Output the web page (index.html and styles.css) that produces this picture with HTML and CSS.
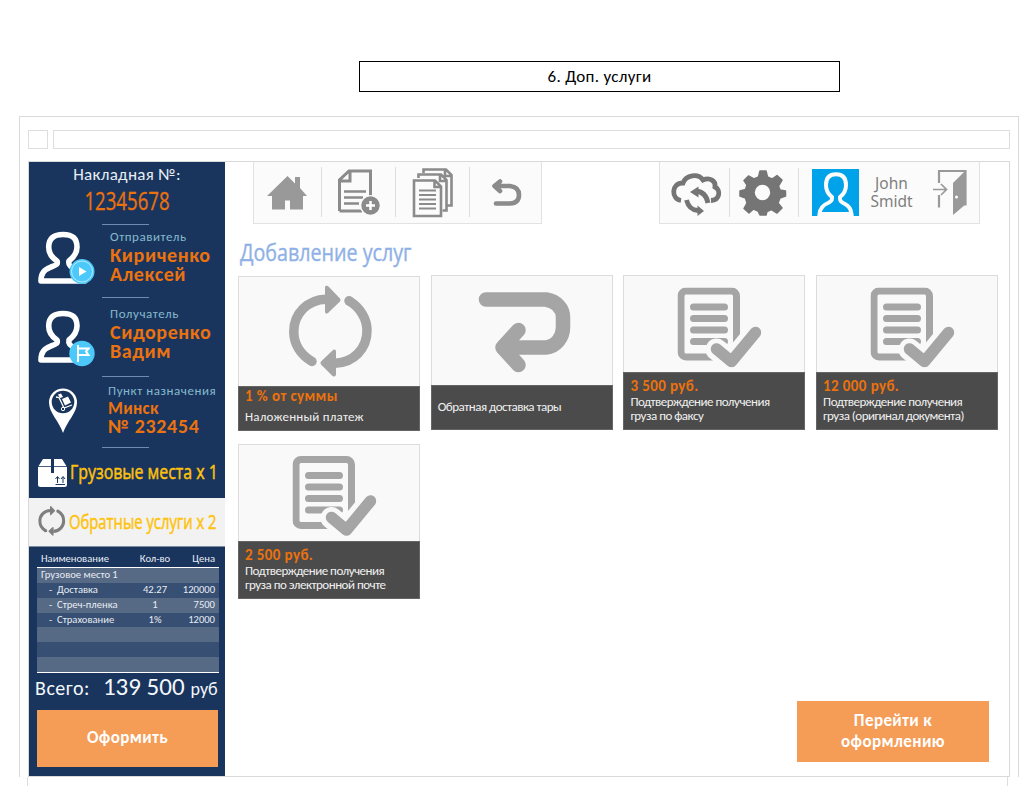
FILE: index.html
```html
<!DOCTYPE html>
<html lang="ru">
<head>
<meta charset="utf-8">
<title>Доп. услуги</title>
<link rel="stylesheet" href="styles.css">
</head>
<body>
<svg width="0" height="0" class="defs" aria-hidden="true">
  <symbol id="person" viewBox="0 0 56 56">
    <path d="M19 31C13 27 10.700 22 10.700 17C10.700 8 16 4.500 25 4.500C34 4.500 39 8 39 17C39 22 36 27 31 31C30 35 32 37 38 39C44 42 46 46 47 51H3C3 43 6 40 13 37C19 35 20 34 19 31Z" fill="none" stroke="#fff" stroke-width="5.600" stroke-linejoin="round"/>
  </symbol>
  <symbol id="cycle" viewBox="0 0 84 92">
    <g fill="none" stroke="currentColor" stroke-width="9.500">
      <path d="M23 76C11 69 4.800 58 4.800 46C4.800 28 19 14 37 13.700"/>
      <path d="M60 15.300C71 22 78 33 78 45C78 63 65 77 46 77.700"/>
    </g>
    <path d="M36 1.500Q37-1 39.500 1L51 13Q52 14.500 51 16L39 27.500Q36.500 29 36 26.500ZM47 65.500Q46 63 43.500 65L32 76Q31 77.500 32 79L43.500 90.500Q46.500 92 47 89Z" fill="currentColor"/>
    <circle cx="23" cy="76" r="4.750" fill="currentColor"/><circle cx="60" cy="15.300" r="4.750" fill="currentColor"/>
  </symbol>
  <symbol id="doc" viewBox="0 0 84 80">
    <rect x="3.500" y="3.500" width="55.500" height="66" rx="5" fill="none" stroke="#a5a5a5" stroke-width="7"/>
    <path d="M16 19.500H47M16 31H47M16 42.500H47M16 54H47" stroke="#a5a5a5" stroke-width="7" stroke-linecap="round"/>
    <path d="M39 62L54 74L78 45" fill="none" stroke="#f9f9f9" stroke-width="22" stroke-linecap="round" stroke-linejoin="round"/>
    <path d="M39 61.500L54 74L78 45" fill="none" stroke="#a5a5a5" stroke-width="11.500" stroke-linecap="round" stroke-linejoin="round"/>
  </symbol>
</svg>
<h1 class="caption">6. Доп. услуги</h1>
<div class="browser">
  <div class="chrome"><span class="chrome-btn"></span><span class="chrome-url"></span></div>
  <div class="page">
    <aside class="sidebar">
      <div class="invoice">
        <div class="invoice-label">Накладная №:</div>
        <div class="invoice-no">12345678</div>
      </div>
      <div class="rule"></div>
      <section class="party sender">
        <svg class="party-icon" viewBox="29 225 81 72"><use href="#person" x="38" y="230" width="56" height="56"/><circle cx="82" cy="271.500" r="12.500" fill="#4dc8fb"/><circle cx="82" cy="271.500" r="10.500" fill="none" stroke="#b9ecff"/><path d="M79 267V276L86.500 271.500Z" fill="#fff"/></svg>
        <div class="party-text"><div class="role">Отправитель</div><div class="name">Кириченко</div><div class="name">Алексей</div></div>
      </section>
      <div class="rule"></div>
      <section class="party receiver">
        <svg class="party-icon" viewBox="29 298 81 78"><use href="#person" x="38" y="309" width="56" height="56"/><circle cx="82" cy="353.500" r="12.700" fill="#4dc8fb"/><path d="M78 345V362M78 348.500H88.500L86 351.500L88.500 355H78" fill="none" stroke="#fff" stroke-width="2"/></svg>
        <div class="party-text"><div class="role">Получатель</div><div class="name">Сидоренко</div><div class="name">Вадим</div></div>
      </section>
      <div class="rule"></div>
      <section class="party dest">
        <svg class="party-icon pin-icon" viewBox="29 377 79 70"><path d="M63 433C59 421 49 413 49 402.500A14 14 0 0 1 77 402.500C77 413 67 421 63 433Z" fill="#fff"/><circle cx="63" cy="402" r="11.300" fill="#19355e"/><path d="M56 397L59 397.500L64 408L72 405" fill="none" stroke="#fff" stroke-width="1.300"/><path d="M62 399L68 396.500L71 402.500L65 405.500ZM58 394.500L61 393.500L63 397L60 398Z" fill="#fff"/><circle cx="63" cy="409" r="1.700" fill="#19355e" stroke="#fff"/></svg>
        <div class="party-text"><div class="role">Пункт назначения</div><div class="city">Минск</div><div class="name">№ 232454</div></div>
      </section>
      <div class="rule"></div>
      <div class="menu cargo"><svg class="menu-icon" viewBox="29 448 41 50"><path d="M43 459H62L67 467V484.500Q67 487 64.500 487H40.500Q38 487 38 484.500V467Z" fill="#fff"/><path d="M38 466.500H51M54 466.500H67" stroke="#19355e" stroke-width=".8"/><path d="M52.500 459V473" stroke="#19355e" stroke-width="3"/><path d="M55.500 484.500H65M57.500 483V477M63 483V477M55.500 479L57.500 476.500L59.500 479M61 479L63 476.500L65 479" fill="none" stroke="#19355e"/></svg><span class="menu-text">Грузовые места х 1</span></div>
      <div class="menu reverse"><svg class="menu-icon" viewBox="29 498 40 49" color="#7f7f7f"><use href="#cycle" x="38" y="506" width="28" height="31"/></svg><span class="menu-text">Обратные услуги х 2</span></div>
      <div class="bill">
        <div class="row head"><span>Наименование</span><span>Кол-во</span><span>Цена</span></div>
        <div class="row group"><span>Грузовое место 1</span></div>
        <div class="row item"><span>-&nbsp; Доставка</span><span>42.27</span><span>120000</span></div>
        <div class="row item"><span>-&nbsp; Стреч-пленка</span><span>1</span><span>7500</span></div>
        <div class="row item"><span>-&nbsp; Страхование</span><span>1%</span><span>12000</span></div>
        <div class="row"></div><div class="row"></div><div class="row"></div>
      </div>
      <div class="total"><span class="total-label">Всего:</span><span class="total-sum">139 500</span><span class="total-cur">руб</span></div>
      <button class="btn submit">Оформить</button>
    </aside>
    <main class="content">
      <header class="bars">
        <nav class="bar">
          <svg class="home" viewBox="253 162 68 61"><path d="M267 196L287.500 176L295 183.500V177H300V188L307 196H303V209.500H290V200.500H285V209.500H272V196Z" fill="#999"/></svg>
          <svg class="wide" viewBox="321 162 74 61"><path d="M339.500 211V180L349 171H370.500V201M339.500 211H362M339.500 181H350V171" fill="none" stroke="#8b8b8b" stroke-width="3"/><path d="M344 191.500H366M344 197.500H363M344 203.500H359" stroke="#8b8b8b" stroke-width="2.600"/><circle cx="370.500" cy="205.500" r="10.500" fill="#fbfbfb"/><circle cx="370.500" cy="205.500" r="9.200" fill="#8b8b8b"/><path d="M366 205.500H375M370.500 201V210" stroke="#fff" stroke-width="2.500"/></svg>
          <svg class="wide" viewBox="395 162 74 61"><path d="M423.500 173V169.500H446L451.500 175V205.500H447.500M418.500 178V174.500H441L446.500 180V210.500H442.500M445 170V176H451M440 175V181H446" fill="none" stroke="#8b8b8b" stroke-width="2.600"/><path d="M414 180.500H435L441 186.500V216H414ZM434.500 181V187H441" fill="#fbfbfb" stroke="#8b8b8b" stroke-width="2.600"/><path d="M419 190.500H436M419 195H436M419 199.500H436M419 204H436M419 208.500H436" stroke="#8b8b8b" stroke-width="1.800"/></svg>
          <svg class="last" viewBox="469 162 72 61"><path d="M496 186H510Q519 187 519 195Q519 203 510 203.500H496M500 181.500L494.500 186L500 191" fill="none" stroke="#8b8b8b" stroke-width="4.600" stroke-linecap="round" stroke-linejoin="round"/></svg>
        </nav>
        <div class="bar userbar">
          <svg class="sync" viewBox="659 162 70 61"><g fill="none" stroke="#757575" stroke-width="4.800"><path d="M681 200.500C671 199 671 183 683 183C686 175 698 173 703 180C710 177 716 181 715 187C721 190 720 200 711 200.500"/><path d="M696 191Q706 192 708 203M686.500 200Q689 210 698 210.500"/></g><path d="M690 192L698.500 186.500V197.500ZM704 211L697.500 205.500V216Z" fill="#757575"/></svg>
          <svg class="gear" viewBox="729 162 69 61"><path d="M758.500 177L760 171H766L767.500 177L772 179L777 175.500L782 180L778.500 186L780 190L785.500 191V196L780 198L778 203L782 208L777 213L771.500 209.500L767 211.500L766 215H760L758 211L753.500 209L749 213L744 208.500L747 203L745.500 198L740 196V191L745.500 189.500L747 185L744 180.500L748.500 176L754 179Z" fill="#757575" stroke="#757575" stroke-width="1.500" stroke-linejoin="round"/><circle cx="762.500" cy="192.500" r="7.700" fill="#fbfbfb"/></svg>
          <svg class="avatar" viewBox="798 162 72 61"><path d="M812 169H859V216H812Z" fill="#00a3e9"/><path d="M832 197C828 194 826 190 826 185C826 178 829 174.300 836 174.300C843 174.300 846 178 846 185C846 190 844 194 840 197C839.500 201 841 202 845 204C849 206 851 209 851.500 214H819.500C820 208 823 205 828 203C832 201 832 200 832 197Z" fill="none" stroke="#fbfbfb" stroke-width="4"/></svg>
          <div class="user">John<br>Smidt</div>
          <svg class="exit" viewBox="922 162 57 61"><path d="M939 183V171H965.500V205.500M939 195V207.500" fill="none" stroke="#999" stroke-width="2.200"/><path d="M953 183L966 170V204L953 215Z" fill="#999"/><circle cx="956.500" cy="197" r="1.500" fill="#fff"/><path d="M933 189.500H946M941 184L946.500 189.500L941 195" fill="none" stroke="#999" stroke-width="1.700"/></svg>
        </div>
      </header>
      <h2 class="title"><span>Добавление услуг</span></h2>
      <div class="cards">
        <article class="card"><svg class="pic" viewBox="238 276 182 110" color="#a5a5a5"><use href="#cycle" x="289" y="285" width="84" height="92"/></svg><div class="info low"><b class="cost">1 % от суммы</b><p class="plain">Наложенный платеж</p></div></article>
        <article class="card raised"><svg class="pic" viewBox="431 276 182 110"><path d="M486 300H546C557 302 563 309 563 318V328C563 338 556 347 546 348H504M518.500 330.500L502.500 348L518.500 365.500" fill="none" stroke="#a5a5a5" stroke-width="14.500" stroke-linecap="round" stroke-linejoin="round"/></svg><div class="info low"><p class="tara">Обратная доставка тары</p></div></article>
        <article class="card raised"><svg class="pic" viewBox="623 276 182 97"><use href="#doc" x="677.500" y="288" width="84" height="80"/></svg><div class="info"><b class="cost">3 500 руб.</b><p>Подтверждение получения<br>груза по факсу</p></div></article>
        <article class="card raised"><svg class="pic" viewBox="816 276 182 97"><use href="#doc" x="870.500" y="288" width="84" height="80"/></svg><div class="info"><b class="cost">12 000 руб.</b><p>Подтверждение получения<br>груза (оригинал документа)</p></div></article>
        <article class="card"><svg class="pic" viewBox="238 445 182 97"><use href="#doc" x="292.500" y="456.500" width="84" height="80"/></svg><div class="info"><b class="cost">2 500 руб.</b><p>Подтверждение получения<br>груза по электронной почте</p></div></article>
      </div>
      <button class="btn proceed">Перейти к<br>оформлению</button>
    </main>
  </div>
</div>
<div class="tail"></div>
</body>
</html>
```
FILE: styles.css
```css
* { box-sizing: border-box; }
body { margin: 0; width: 1033px; height: 796px; overflow: hidden; background: #fff; font-family: Carlito, Lato, "Noto Sans", sans-serif; white-space: nowrap; }
svg { display: block; flex: none; }
.defs { height: 0; margin: 0; }
p, h1, h2 { margin: 0; font-weight: 400; }
.caption { margin: 61px 0 0 359px; width: 481px; height: 31px; border: 1px solid #000; text-align: center; font-size: 17px; letter-spacing: .3px; line-height: 29px; }
.browser { margin: 24px 0 0 19px; width: 1000px; height: 661px; border: 1px solid #d9d9d9; border-bottom: 0; padding: 13px 8px 0; }
.chrome { display: flex; gap: 5px; height: 19px; }
.chrome-btn { width: 20px; border: 1px solid #dedede; }
.chrome-url { flex: 1; border: 1px solid #dedede; }
.page { margin-top: 12px; width: 982px; height: 616px; border: 1px solid #d9d9d9; display: flex; }
.tail { margin-left: 27px; width: 981px; height: 9px; border: solid #dedede; border-width: 0 1px; }
.sidebar { width: 196px; height: 614px; background: #19355e; flex: none; }
.invoice { height: 62px; text-align: center; }
.invoice-label { color: #e8edf4; font-size: 17px; letter-spacing: .3px; line-height: 26px; }
.invoice-no { color: #ec720d; font-size: 25px; line-height: 25px; transform: scaleX(.745); font-family: "Open Sans", sans-serif; -webkit-text-stroke: .3px currentColor; }
.rule { height: 1px; width: 47px; margin-left: 73px; background: #6f8bb4; }
.party { display: flex; color: #ec720d; }
.sender { height: 72px; }
.receiver { height: 78px; }
.dest { height: 70px; }
.party-icon { width: 81px; }
.pin-icon { width: 79px; }
.party-text { padding-top: 3px; }
.receiver .party-text { padding-top: 7px; }
.dest .party-text { padding-top: 5px; }
.role { color: #86b9cc; font-size: 13px; letter-spacing: .55px; line-height: 18px; }
.name { font-weight: 700; font-size: 20px; letter-spacing: .6px; line-height: 19px; }
.city { font-weight: 700; font-size: 17px; letter-spacing: .3px; line-height: 17px; }
.dest .name { letter-spacing: .65px; }
.menu { display: flex; align-items: center; color: #ffc20a; font: 20px "Open Sans", sans-serif; -webkit-text-stroke: .5px currentColor; }
.menu-icon { width: 40px; height: 100%; }
.cargo .menu-icon { width: 41px; }
.cargo { height: 50px; }
.reverse { height: 49px; background: #f2f2f2; border-bottom: 1px solid #7e8b9f; }
.menu-text { padding-bottom: 3px; transform: scaleX(.795); transform-origin: left; }
.reverse .menu-text { padding-bottom: 2px; transform: scaleX(.74); }
.bill { margin: 4px 6px 0 8px; color: #e8edf4; font-size: 10.600px; border-bottom: 1px solid #fff; }
.row { display: grid; grid-template-columns: 92px 44px 1fr; height: 14.857px; line-height: 14px; padding: 0 4px 0 4px; background: #374f72; }
.row:nth-child(even) { background: #566985; }
.row span:nth-child(2) { text-align: center; }
.row span:nth-child(3) { text-align: right; }
.row.head { height: 17px; line-height: 15px; background: none; border-bottom: 1px solid #fff; }
.item span:first-child { padding-left: 8px; }
.total { height: 37px; padding: 0 8px 0 6px; display: flex; align-items: baseline; color: #f4f7fb; }
.total-label { font-size: 20px; letter-spacing: .5px; }
.total-sum { font-size: 25px; margin-left: 13px; line-height: 27px; }
.total-cur { font-size: 18px; margin-left: 6px; }
.btn { display: block; border: 0; padding: 0 0 2px; background: #f59c57; color: #fff; font: 700 17px/21px Carlito, Lato, "Noto Sans", sans-serif; letter-spacing: .4px; }
.submit { width: 181px; height: 57px; margin-left: 8px; }
.content { flex: 1; padding-left: 13px; }
.bars { display: flex; justify-content: space-between; padding: 0 29px 0 15px; height: 62px; }
.bar { display: flex; border: 1px solid #e2e2e2; border-top: 0; background: linear-gradient(#dedede, #dedede) 67px 5px / 1px 50px no-repeat, linear-gradient(#dedede, #dedede) 141px 5px / 1px 50px no-repeat, linear-gradient(#dedede, #dedede) 215px 5px / 1px 50px no-repeat, #fbfbfb; width: 289px; }
.bar svg { height: 61px; }
.home { width: 68px; margin-left: -1px; }
.wide { width: 74px; }
.last { width: 72px; }
.userbar { width: 321px; background: linear-gradient(#dedede, #dedede) 69px 6px / 1px 49px no-repeat, linear-gradient(#dedede, #dedede) 138px 6px / 1px 49px no-repeat, #fbfbfb; }
.sync { width: 70px; margin-left: -1px; }
.gear { width: 69px; }
.avatar { width: 72px; }
.user { width: 52px; flex: none; padding: 12px 9px 0 0; text-align: center; font: 15.500px/18px "Noto Sans", sans-serif; color: #7f7f7f; }
.exit { width: 57px; }
.title { height: 52px; color: #8fb1e5; font: 24px/56px "Open Sans", sans-serif; -webkit-text-stroke: .4px currentColor; }
.title span { display: inline-block; margin-left: 2px; transform: scaleX(.82); transform-origin: left; }
.cards { display: grid; grid-template-columns: repeat(4, 182px); gap: 13px 10.700px; }
.card { height: 155px; background: #f9f9f9; border: 1px solid #dcdcdc; display: flex; flex-direction: column; }
.raised { margin-top: -1px; }
.pic { width: 182px; flex: 1; min-height: 0; margin: -1px; }
.info { height: 58px; flex: none; margin: 0 -1px -1px; padding: 4px 6px; background: #4b4b4b; border: 1px solid #656565; color: #f0f0f0; }
.low { height: 45px; padding-top: 0; }
.cost { display: block; color: #ec720d; font-size: 15px; letter-spacing: .4px; line-height: 18px; }
.info p { font-size: 13px; letter-spacing: -.5px; line-height: 14px; }
.info .plain { line-height: 23px; letter-spacing: .2px; }
.info .tara { line-height: 41px; }
.proceed { width: 192px; height: 61px; margin: 102px 0 0 559px; }
```
